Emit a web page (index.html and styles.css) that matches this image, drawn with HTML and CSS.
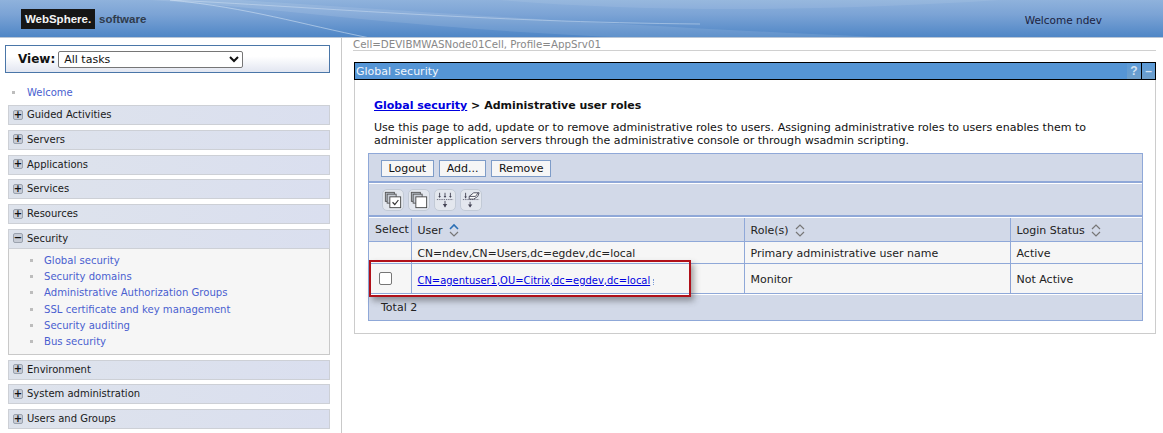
FILE: index.html
```html
<!DOCTYPE html>
<html lang="en">
<head>
<meta charset="utf-8">
<title>WebSphere Integrated Solutions Console</title>
<link rel="stylesheet" href="styles.css">
</head>
<body>
<header class="banner">
  <svg class="swoosh" width="1163" height="38" viewBox="0 0 1163 38" aria-hidden="true">
    <path d="M150 0 C300 10 420 30 640 38 L900 38 C620 26 400 10 240 0Z" fill="#ffffff" opacity=".1"/>
    <path d="M170 0 C250 8 300 24 370 38" stroke="#cfe0f2" stroke-width="1" fill="none" opacity=".6"/>
    <path d="M170 0 C300 6 480 22 700 24" stroke="#cfe0f2" stroke-width="1" fill="none" opacity=".5"/>
    <path d="M500 0 C640 12 820 12 1000 0Z" fill="#ffffff" opacity=".08"/>
  </svg>
  <div class="brand"><span class="brand-box">WebSphere.</span><span class="brand-soft">software</span></div>
  <div class="welcome">Welcome ndev</div>
</header>
<div class="page">
  <nav class="side">
    <div class="view-box">
      <label class="view-label" for="view">View:</label>
      <select id="view" class="view-select"><option>All tasks</option></select>
    </div>
    <div class="welcome-link"><span class="bullet"></span><a href="#">Welcome</a></div>
    <div class="group"><span class="tog">+</span>Guided Activities</div>
    <div class="group"><span class="tog">+</span>Servers</div>
    <div class="group"><span class="tog">+</span>Applications</div>
    <div class="group"><span class="tog">+</span>Services</div>
    <div class="group"><span class="tog">+</span>Resources</div>
    <div class="group open"><span class="tog">&#8722;</span>Security</div>
    <ul class="children">
      <li><span class="bullet"></span><a href="#">Global security</a></li>
      <li><span class="bullet"></span><a href="#">Security domains</a></li>
      <li><span class="bullet"></span><a href="#">Administrative Authorization Groups</a></li>
      <li><span class="bullet"></span><a href="#">SSL certificate and key management</a></li>
      <li><span class="bullet"></span><a href="#">Security auditing</a></li>
      <li><span class="bullet"></span><a href="#">Bus security</a></li>
    </ul>
    <div class="group"><span class="tog">+</span>Environment</div>
    <div class="group"><span class="tog">+</span>System administration</div>
    <div class="group"><span class="tog">+</span>Users and Groups</div>
  </nav>
  <main class="main">
    <div class="cell">Cell=DEVIBMWASNode01Cell, Profile=AppSrv01</div>
    <section class="panel">
      <div class="title-bar">
        <span class="title-text">Global security</span>
        <span class="title-btn">?</span>
        <span class="title-btn min">&#8211;</span>
      </div>
      <div class="panel-body">
        <h1 class="crumb"><a href="#">Global security</a> &gt; Administrative user roles</h1>
        <p class="desc">Use this page to add, update or to remove administrative roles to users. Assigning administrative roles to users enables them to<br>administer application servers through the administrative console or through wsadmin scripting.</p>
        <div class="table-box">
          <div class="btn-row">
            <button class="btn">Logout</button><button class="btn">Add...</button><button class="btn">Remove</button>
          </div>
          <div class="icon-row">
            <span class="ico"><svg width="20" height="20" viewBox="0 0 20 20"><rect x="1.5" y="1.5" width="10" height="10" fill="#b9c0c9" stroke="#555"/><rect x="3.5" y="3.5" width="10" height="10" fill="#c9ced6" stroke="#555"/><rect x="6.5" y="6.5" width="12" height="12" fill="#fff" stroke="#444"/><path d="M9.5 12.5l2.500 2.500 4-5" fill="none" stroke="#333" stroke-width="1.300"/></svg></span>
            <span class="ico"><svg width="20" height="20" viewBox="0 0 20 20"><rect x="1.5" y="1.500" width="10" height="10" fill="#b9c0c9" stroke="#555"/><rect x="3.500" y="3.500" width="10" height="10" fill="#c9ced6" stroke="#555"/><rect x="6.500" y="6.500" width="12" height="12" fill="#fff" stroke="#444"/></svg></span>
            <span class="ico"><svg width="20" height="20" viewBox="0 0 20 20"><path d="M1 9.500h18" stroke="#667" stroke-dasharray="1.500 1"/><path d="M4 2v5M10 2v5M16 2v5M10 11v7" stroke="#445" fill="none"/><path d="M2.500 5.500L4 7.500 5.500 5.500M8.500 5.500L10 7.500 11.500 5.500M14.500 5.500L16 7.500 17.500 5.500M7.500 14.500L10 18 12.500 14.500" fill="#445"/></svg></span>
            <span class="ico"><svg width="20" height="20" viewBox="0 0 20 20"><path d="M1 9.500h18" stroke="#667" stroke-dasharray="1.500 1"/><path d="M4 2v6M9 12v6" stroke="#445"/><path d="M2.500 6L4 8 5.500 6M6.500 15L9 18 11.500 15" fill="#445"/><path d="M8 6l5-4h6l-1.500 4-4.500 3H8z" fill="#fff" stroke="#445"/><path d="M8 6h7l3-4" fill="none" stroke="#445"/></svg></span>
          </div>
          <table class="grid">
            <colgroup><col class="c1"><col class="c2"><col class="c3"><col class="c4"></colgroup>
            <thead>
              <tr>
                <th>Select</th>
                <th>User <svg class="sort" width="10" height="14" viewBox="0 0 10 14"><path d="M1 6l4-4 4 4" fill="none" stroke="#2a6fb5" stroke-width="1.600"/><path d="M1 9l4 4 4-4" fill="none" stroke="#777" stroke-width="1.200"/></svg></th>
                <th>Role(s) <svg class="sort" width="10" height="14" viewBox="0 0 10 14"><path d="M1 6l4-4 4 4M1 9l4 4 4-4" fill="none" stroke="#777" stroke-width="1.200"/></svg></th>
                <th>Login Status <svg class="sort" width="10" height="14" viewBox="0 0 10 14"><path d="M1 6l4-4 4 4M1 9l4 4 4-4" fill="none" stroke="#777" stroke-width="1.200"/></svg></th>
              </tr>
            </thead>
            <tbody>
              <tr class="r1"><td></td><td class="dn">CN=ndev,CN=Users,dc=egdev,dc=local</td><td>Primary administrative user name</td><td>Active</td></tr>
              <tr class="r2"><td class="chk"><span class="checkbox"></span></td><td class="link-cell"><a href="#">CN=agentuser1,OU=Citrix,dc=egdev,dc=local</a><span class="link-tail"></span></td><td>Monitor</td><td>Not Active</td></tr>
            </tbody>
          </table>
          <div class="total">Total 2</div>
        </div>
      </div>
    </section>
    <div class="callout"></div>
  </main>
</div>
</body>
</html>
```
FILE: styles.css
```css
* { box-sizing: border-box; }
html, body { margin: 0; padding: 0; }
body {
  width: 1163px;
  height: 433px;
  overflow: hidden;
  background: #fff;
  font-family: "DejaVu Sans", Verdana, sans-serif;
  font-size: 11px;
  color: #222;
}
.banner {
  position: relative;
  height: 38px;
  display: flex;
  align-items: flex-start;
  justify-content: space-between;
  background: linear-gradient(180deg, #8fb2dc 0%, #7ba3d5 40%, #4f86c6 100%);
  border-bottom: 1px solid #b9c6d6;
  overflow: hidden;
}
.swoosh { position: absolute; left: 0; top: 0; }
.brand { position: relative; display: flex; align-items: center; margin: 9px 0 0 21px; }
.brand-box {
  width: 74px;
  height: 20px;
  background: #161616;
  color: #f4f4f4;
  font: bold 11.5px/20px "Liberation Sans", Arial, sans-serif;
  text-align: center;
}
.brand-soft {
  margin-left: 4px;
  color: #2f3b4c;
  font: bold 11.5px/20px "Liberation Sans", Arial, sans-serif;
}
.welcome { position: relative; margin: 13px 61px 0 0; color: #1c2340; font-size: 10.5px; line-height: 14px; }
.page { display: flex; height: 395px; }
.side {
  width: 342px;
  flex: none;
  padding: 7px 11px 0 5px;
  border-right: 1px solid #c9c9c9;
}
.view-box {
  height: 28px;
  display: flex;
  align-items: center;
  gap: 3px;
  padding-left: 12px;
  border: 1px solid #4a76a8;
  background: linear-gradient(180deg, #fff 0%, #fff 40%, #e2e6f1 100%);
}
.view-label { font-weight: bold; font-size: 12px; color: #111; }
.view-select {
  width: 185px;
  height: 17px;
  padding: 0 0 0 1px;
  font: 11px "DejaVu Sans", Verdana, sans-serif;
  color: #111;
  background: #fff;
  border: 1px solid #767676;
  border-radius: 2px;
}
a { color: #4a5fd0; text-decoration: none; }
.welcome-link { height: 32px; display: flex; align-items: center; margin-left: 7px; padding-top: 7px; font-size: 10px; }
.welcome-link .bullet { margin-right: 12px; }
.bullet { display: inline-block; width: 3px; height: 3px; background: #bdbdbd; flex: none; }
.group {
  height: 20px;
  margin: 0 0 4.75px 3px;
  display: flex;
  align-items: center;
  padding-left: 4px;
  padding-bottom: 1px;
  border: 1px solid #cdd0d6;
  background: linear-gradient(90deg, #dee3ec, #dadfef);
  font-size: 10px;
  color: #1a1a1a;
}
.group.open { margin-bottom: 0; }
.tog {
  width: 10px;
  height: 10px;
  margin-right: 4px;
  display: flex;
  align-items: center;
  justify-content: center;
  background: #c7ccd6;
  border: 1px solid #9ba2ae;
  border-radius: 2px;
  font: bold 10px/8px "DejaVu Sans", sans-serif;
  color: #111;
}
.children {
  list-style: none;
  margin: 0 0 5px 3px;
  padding: 3.5px 0 3.5px 21px;
  border: 1px solid #c9c9c9;
  border-top: 0;
  background: #f6f6f6;
  font-size: 10.1px;
}
.children li { height: 16.3px; display: flex; align-items: center; }
.children .bullet { margin-right: 11px; }
.main { position: relative; flex: 1; padding: 0 7px 0 11px; min-width: 0; }
.cell {
  height: 13px;
  color: #888;
  font-size: 10.3px;
  line-height: 12px;
  border-bottom: 1px solid #d0d0d0;
  white-space: nowrap;
}
.panel {
  margin: 11px 0 0 1px;
  height: 272px;
  border: 1px solid #cccccc;
  border-top: 0;
}
.title-bar {
  height: 18px;
  margin-left: -1px;
  margin-right: -1px;
  display: flex;
  align-items: center;
  border: 1px solid #000;
  background: #5595d5;
  color: #f2f6fb;
  font-size: 11px;
}
.title-text { flex: 1; padding-left: 1px; }
.title-btn {
  width: 14px;
  height: 16px;
  display: flex;
  align-items: center;
  justify-content: center;
  background: linear-gradient(180deg, #5b9ad8, #6f9fca);
  color: #d5e2f0;
  font: bold 12px/16px "Liberation Sans", sans-serif;
}
.title-btn.min { border-left: 1px solid #000; width: 14px; }
.panel-body { padding: 0 13px; }
.crumb { margin: 18px 0 0 6px; font-size: 11px; line-height: 16px; font-weight: bold; color: #111; }
.crumb a { color: #0000e0; text-decoration: underline; }
.desc { margin: 7px 0 0 6px; font-size: 11.05px; line-height: 13px; color: #111; white-space: nowrap; }
.table-box {
  margin-top: 6px;
  width: 775px;
  height: 168px;
  border: 1px solid #8fa8d8;
  background: #d2d9e8;
  display: flex;
  flex-direction: column;
}
.btn-row {
  height: 29px;
  display: flex;
  align-items: center;
  gap: 5.5px;
  padding: 1px 0 0 12px;
  border-bottom: 2px solid #8fa8d8;
  flex: none;
}
.btn {
  height: 17px;
  padding: 0 6.5px;
  font: 11px "DejaVu Sans", sans-serif;
  color: #111;
  background: #f6f6f6;
  border: 1px solid #7e9cc8;
  border-radius: 0;
}
.icon-row {
  height: 34px;
  display: flex;
  align-items: center;
  gap: 4px;
  flex: none;
  padding: 1px 0 0 13px;
  border-top: 1px solid #fff;
  border-bottom: 2px solid #8fa8d8;
}
.ico {
  width: 22px;
  height: 22px;
  display: flex;
  align-items: center;
  justify-content: center;
  background: #e3e7ee;
  border: 1px solid #c2cad6;
  border-radius: 5px;
}
.ico svg { width: 18px; height: 18px; }
.grid {
  width: 773px;
  table-layout: fixed;
  border-collapse: collapse;
  flex: none;
}
.c1 { width: 42px; }
.c2 { width: 333px; }
.c3 { width: 266px; }
.c4 { width: 132px; }
.grid th, .grid td {
  padding: 0 0 0 6px;
  text-align: left;
  font-weight: normal;
  font-size: 11px;
  color: #222;
  border-left: 1px solid #8fa8d8;
  border-bottom: 1px solid #8fa8d8;
}
.grid th:first-child, .grid td:first-child { border-left: 0; }
.grid th { height: 24px; background: #d2d9e8; border-top: 1px solid #fff; }
.grid td { background: #f6f6f6; }
.r1 td { height: 22px; padding-top: 2px; }
.r2 td { height: 30px; padding-top: 1px; }
.grid .dn { font-size: 10.75px; }
.sort { vertical-align: -3px; margin-left: 3px; }
.grid .chk { padding-top: 0; }
.checkbox {
  display: block;
  width: 13px;
  height: 13px;
  margin: -1px 0 0 4px;
  background: #fff;
  border: 1px solid #767676;
  border-radius: 2px;
}
.grid .link-cell { font-size: 9.95px; padding-top: 3px; }
.link-cell a { color: #0000e0; text-decoration: underline; }
.link-tail {
  display: inline-block;
  width: 0;
  height: 6px;
  margin-left: 3px;
  border-left: 1px dotted #7a9ad8;
  vertical-align: -1px;
}
.total { flex: 1; padding: 6px 0 0 12px; font-size: 11px; color: #222; border-top: 1px solid #fff; }
.callout {
  position: absolute;
  left: 27px;
  top: 222px;
  width: 322px;
  height: 37px;
  border: 2px solid #b01019;
  box-shadow: 3px 4px 6px rgba(60, 60, 60, .45);
  pointer-events: none;
}
```
